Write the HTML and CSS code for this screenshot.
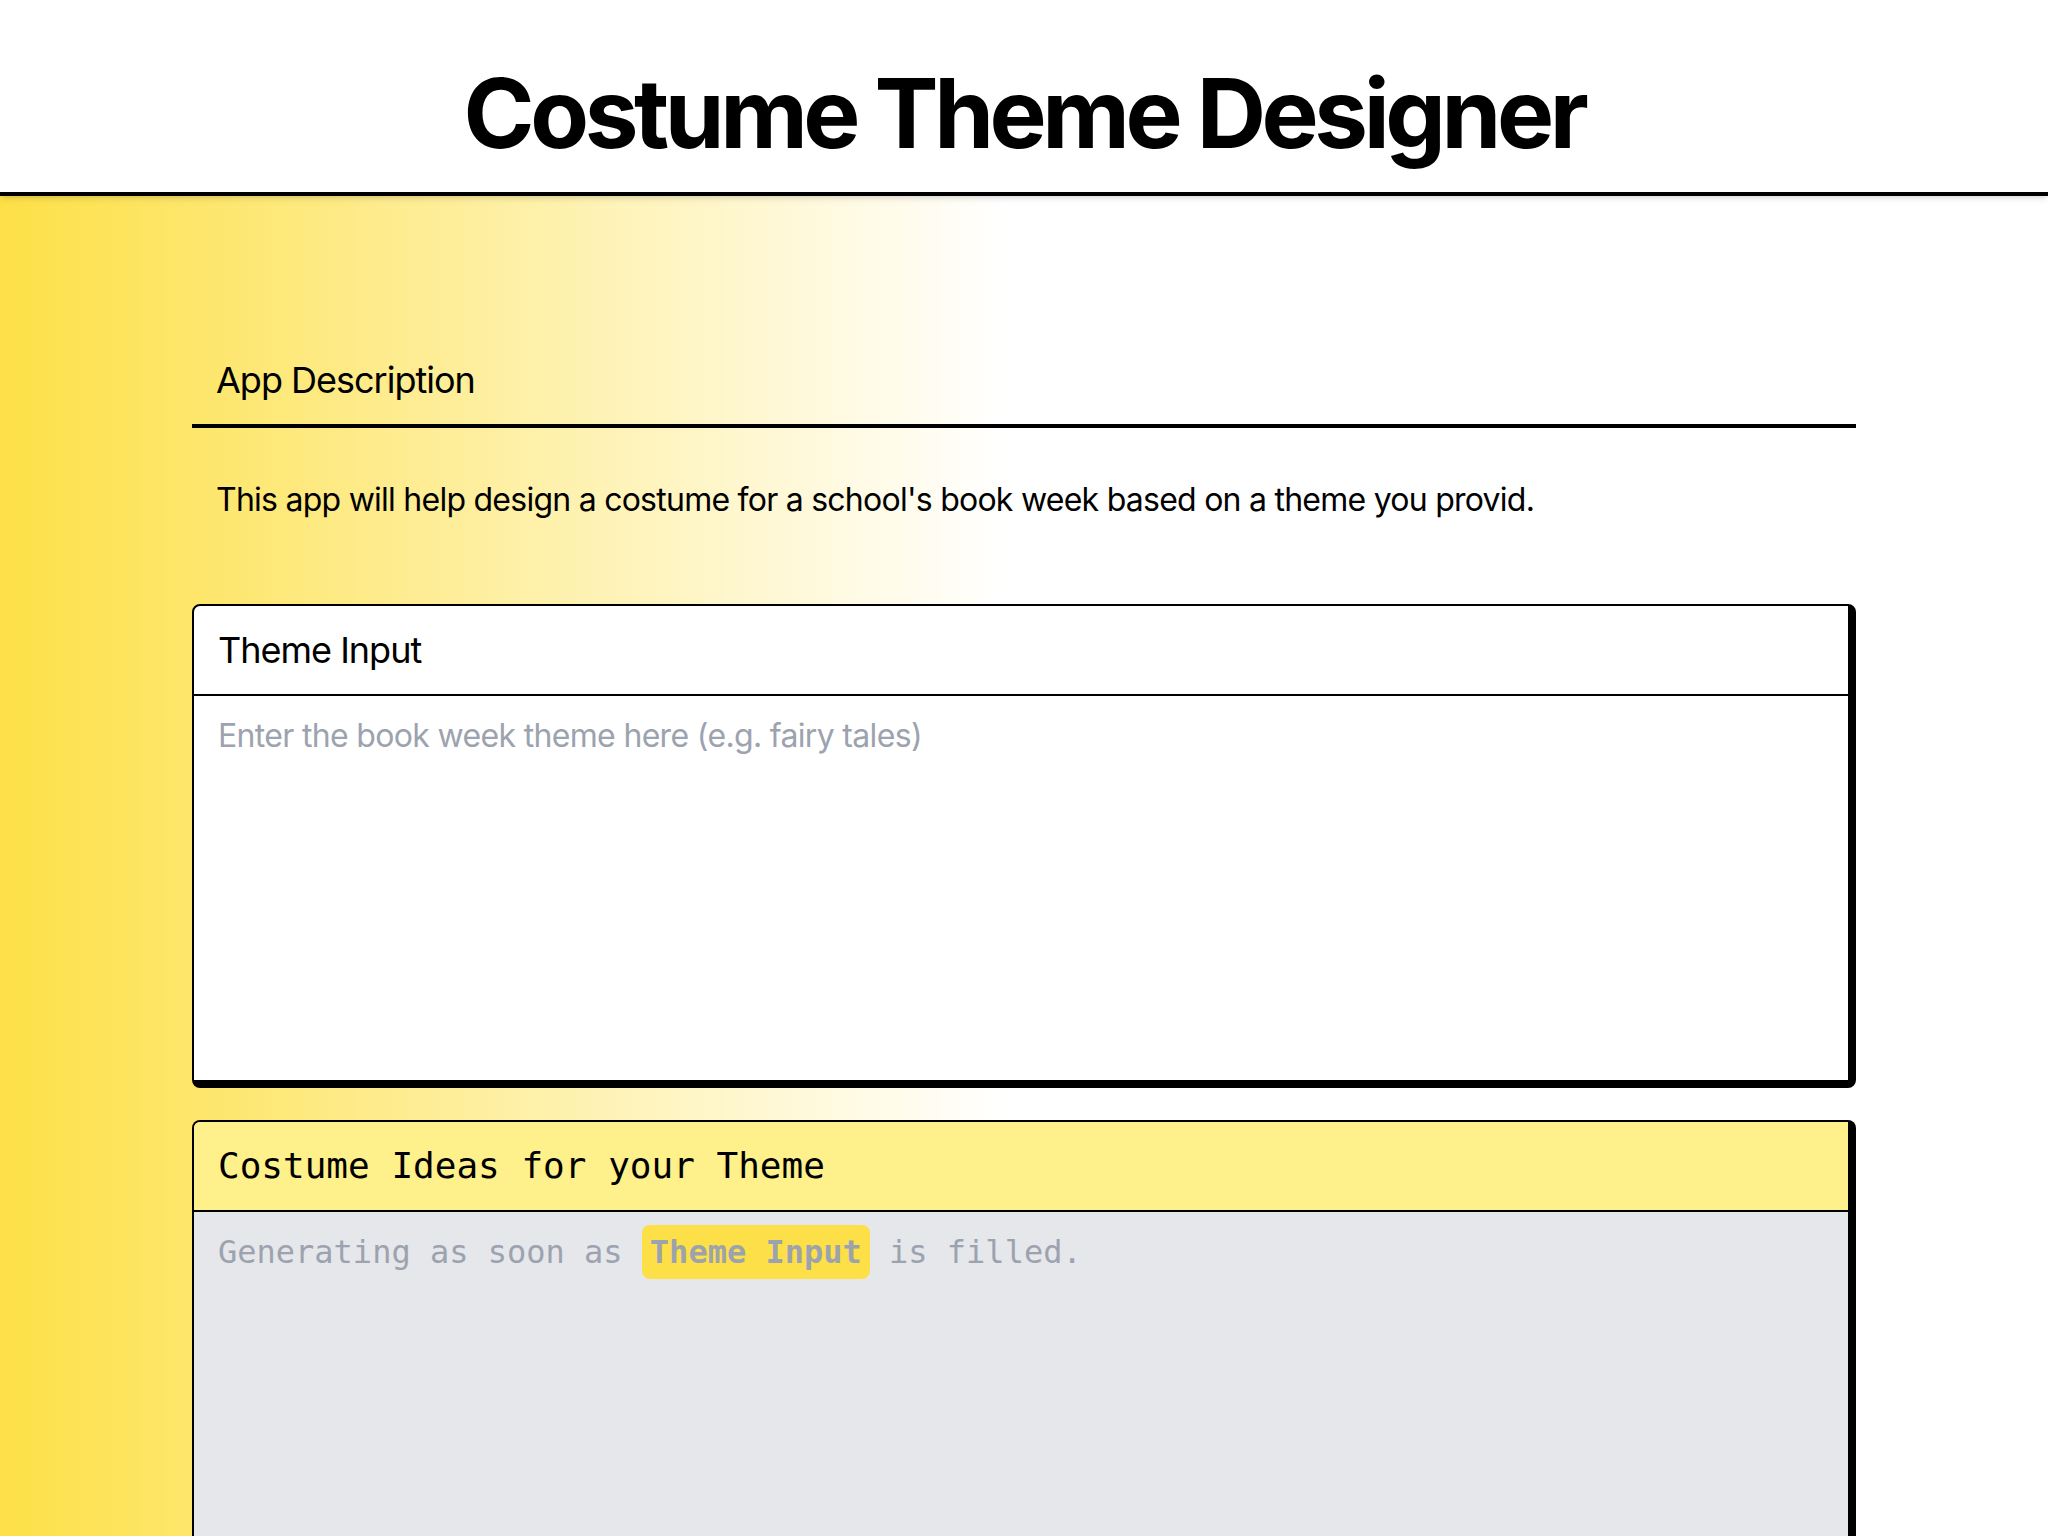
FILE: index.html
```html
<!DOCTYPE html>
<html lang="en">
<head>
<meta charset="utf-8">
<title>Costume Theme Designer</title>
<link rel="stylesheet" href="styles.css">
</head>
<body>
<header class="top-bar">
  <h1 class="title">Costume Theme Designer</h1>
</header>
<main class="content">
  <section class="about">
    <h2 class="about-heading">App Description</h2>
    <p class="about-text">This app will help design a costume for a school's book week based on a theme you provid.</p>
  </section>
  <section class="card">
    <div class="card-header">Theme Input</div>
    <textarea class="theme-input" placeholder="Enter the book week theme here (e.g. fairy tales)"></textarea>
  </section>
  <section class="card card-output">
    <div class="card-header card-header-mono">Costume Ideas for your Theme</div>
    <div class="output-body">Generating as soon as <span class="tag">Theme Input</span> is filled.</div>
  </section>
</main>
</body>
</html>
```

FILE: styles.css
```css
html, body {
  margin: 0;
  padding: 0;
}

body {
  font-family: Inter, "Noto Sans", "Liberation Sans", sans-serif;
  color: #000;
  background: linear-gradient(to right, #fde047 0%, #ffffff 49%, #ffffff 100%);
  min-height: 1536px;
  overflow: hidden;
}

.top-bar {
  background: #ffffff;
  border-bottom: 4px solid #000;
  box-shadow: 0 4px 6px -1px rgba(0, 0, 0, 0.1), 0 2px 4px -2px rgba(0, 0, 0, 0.1);
  height: 192px;
  box-sizing: content-box;
  display: flex;
  justify-content: center;
  position: relative;
  z-index: 1;
}

.title {
  margin: 0;
  padding-top: 65px;
  font-size: 96px;
  line-height: 96px;
  font-weight: 700;
  letter-spacing: -4.4px;
}

.content {
  margin: 0 192px;
  padding-top: 140px;
}

.about-heading {
  margin: 0;
  padding: 16px 24px;
  font-size: 36px;
  line-height: 56px;
  font-weight: 400;
  letter-spacing: -1px;
  border-bottom: 4px solid #000;
}

.about-text {
  margin: 48px 0 0;
  padding: 0 24px;
  font-size: 32px;
  line-height: 48px;
  letter-spacing: -0.75px;
}

.card {
  margin-top: 80px;
  border: 2px solid #000;
  border-right-width: 8px;
  border-bottom-width: 8px;
  border-radius: 8px;
  background: #ffffff;
  overflow: hidden;
}

.card-output {
  margin-top: 32px;
  border-bottom: none;
  border-bottom-left-radius: 0;
  border-bottom-right-radius: 0;
}

.card-header {
  padding: 16px 24px;
  font-size: 36px;
  line-height: 56px;
  letter-spacing: -1px;
  border-bottom: 2px solid #000;
}

.card-header-mono {
  background: #fef08a;
  font-family: "DejaVu Sans Mono", "Liberation Mono", monospace;
  letter-spacing: 0;
}

.theme-input {
  display: block;
  box-sizing: border-box;
  width: 100%;
  height: 384px;
  margin: 0;
  padding: 16px 24px;
  border: none;
  outline: none;
  resize: none;
  font-family: Inter, "Noto Sans", "Liberation Sans", sans-serif;
  font-size: 32px;
  line-height: 48px;
  letter-spacing: -0.67px;
  color: #000;
  background: #ffffff;
}

.theme-input::placeholder {
  color: #9ca3af;
}

.output-body {
  background: #e5e7eb;
  min-height: 600px;
  padding: 16px 24px;
  font-family: "DejaVu Sans Mono", "Liberation Mono", monospace;
  font-size: 32px;
  line-height: 48px;
  color: #9ca3af;
}

.tag {
  background: #fde047;
  font-weight: 700;
  padding: 8px;
  border-radius: 8px;
}
```
